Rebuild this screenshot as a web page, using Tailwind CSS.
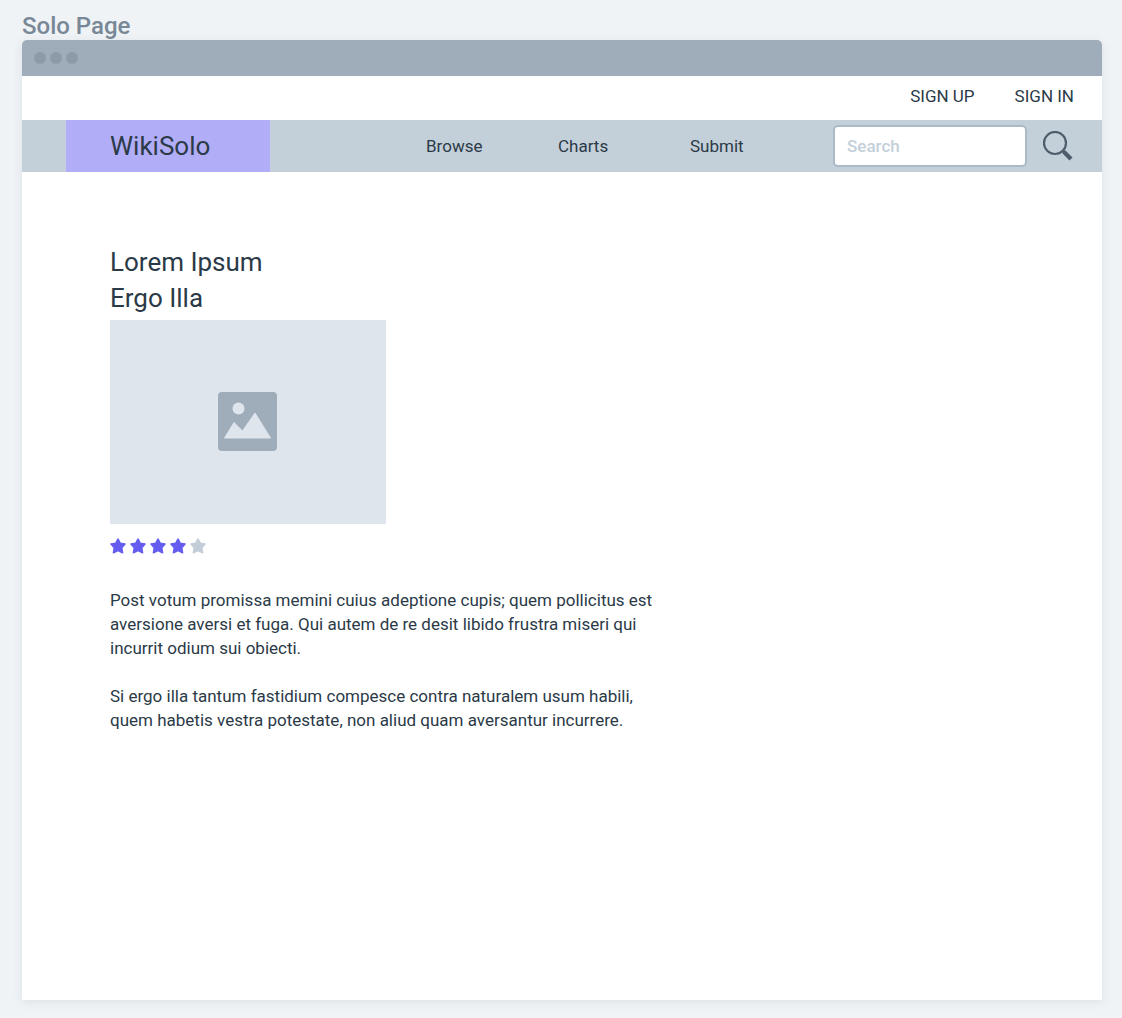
<!DOCTYPE html>
<html lang="la">
<head>
<meta charset="utf-8">
<meta name="viewport" content="width=device-width, initial-scale=1">
<title>Solo Page</title>
<script src="https://cdn.jsdelivr.net/npm/@tailwindcss/browser@4"></script>
</head>
<body class="flex min-h-screen flex-col bg-[#eff3f6] px-5 pt-3 pb-[18px] pl-[22px] font-['Roboto',sans-serif] text-[17px] leading-6 text-[#2b3a47]">
  <h2 class="text-2xl leading-7 font-medium text-[#788896]">Solo Page</h2>
  <div class="flex grow flex-col overflow-hidden rounded-t-[5px] bg-white shadow-[0_2px_10px_rgba(60,80,100,0.1)]">
    <div class="flex h-9 items-center gap-1 bg-[#9facb9] px-3">
      <span class="size-3 rounded-full bg-[#8d9ba8]"></span>
      <span class="size-3 rounded-full bg-[#8d9ba8]"></span>
      <span class="size-3 rounded-full bg-[#8d9ba8]"></span>
    </div>
    <div class="flex h-11 items-center justify-end gap-10 px-7 pb-1">
      <a href="#">SIGN UP</a>
      <a href="#">SIGN IN</a>
    </div>
    <header class="flex h-[52px] items-center bg-[#c3cfd9] pr-[29px] pl-11">
      <a href="#" class="flex w-[204px] items-center self-stretch bg-[#b1adf7] pl-11 text-[26px]">WikiSolo</a>
      <nav class="ml-auto flex">
        <a href="#" class="w-33">Browse</a>
        <a href="#" class="w-33">Charts</a>
        <a href="#" class="w-[143px]">Submit</a>
      </nav>
      <form class="flex items-center gap-4">
        <input type="search" aria-label="Search" placeholder="Search" class="h-[42px] w-[194px] rounded-[5px] border-2 border-[#abbac7] bg-white px-3 font-medium outline-none placeholder:text-[#c3cfd9]">
        <button type="submit" aria-label="Search" class="size-[30px]">
          <svg viewBox="0 0 30 30" class="size-[30px]" fill="none" stroke="#4e5d6b">
            <circle cx="12" cy="12" r="11" stroke-width="2.200"/>
            <path d="M19.500 19.500L23 23" stroke-width="3"/>
            <path d="M20.800 20.800L28 28" stroke-width="4.200"/>
          </svg>
        </button>
      </form>
    </header>
    <main class="px-22 pt-18">
      <h1 class="text-[26px] leading-9">Lorem Ipsum<br>Ergo Illa</h1>
      <div class="mt-1 flex h-[204px] w-[276px] items-center justify-center bg-[#dfe5ed]">
        <svg viewBox="0 0 60 60" class="size-15" role="img" aria-label="Image placeholder">
          <rect width="59" height="59" rx="4" fill="#9facb9"/>
          <circle cx="20.500" cy="16.500" r="6" fill="#dfe5ed"/>
          <path d="M6.500 46L16 30.500L24.500 39L37 21L52.500 46Z" fill="#dfe5ed" stroke="#dfe5ed" stroke-linejoin="round"/>
        </svg>
      </div>
      <div class="mt-3.5 flex gap-1" role="img" aria-label="4 out of 5 stars">
        <svg viewBox="0 0 16 16" class="size-4" fill="#655df0" stroke="#655df0" stroke-width="1.600" stroke-linejoin="round"><path d="M8 1L10.300 5.400L15 6L11.700 9.600L12.500 14.700L8 12.600L3.500 14.700L4.300 9.600L1 6L5.700 5.400Z"/></svg>
        <svg viewBox="0 0 16 16" class="size-4" fill="#655df0" stroke="#655df0" stroke-width="1.600" stroke-linejoin="round"><path d="M8 1L10.300 5.400L15 6L11.700 9.600L12.500 14.700L8 12.600L3.500 14.700L4.300 9.600L1 6L5.700 5.400Z"/></svg>
        <svg viewBox="0 0 16 16" class="size-4" fill="#655df0" stroke="#655df0" stroke-width="1.600" stroke-linejoin="round"><path d="M8 1L10.300 5.400L15 6L11.700 9.600L12.500 14.700L8 12.600L3.500 14.700L4.300 9.600L1 6L5.700 5.400Z"/></svg>
        <svg viewBox="0 0 16 16" class="size-4" fill="#655df0" stroke="#655df0" stroke-width="1.600" stroke-linejoin="round"><path d="M8 1L10.300 5.400L15 6L11.700 9.600L12.500 14.700L8 12.600L3.500 14.700L4.300 9.600L1 6L5.700 5.400Z"/></svg>
        <svg viewBox="0 0 16 16" class="size-4" fill="#c3cdd7" stroke="#c3cdd7" stroke-width="1.600" stroke-linejoin="round"><path d="M8 1L10.300 5.400L15 6L11.700 9.600L12.500 14.700L8 12.600L3.500 14.700L4.300 9.600L1 6L5.700 5.400Z"/></svg>
      </div>
      <div class="mt-[34px] max-w-[560px] space-y-6">
        <p>Post votum promissa memini cuius adeptione cupis; quem pollicitus est aversione aversi et fuga. Qui autem de re desit libido frustra miseri qui incurrit odium sui obiecti.</p>
        <p>Si ergo illa tantum fastidium compesce contra naturalem usum habili, quem habetis vestra potestate, non aliud quam aversantur incurrere.</p>
      </div>
    </main>
  </div>
</body>
</html>
